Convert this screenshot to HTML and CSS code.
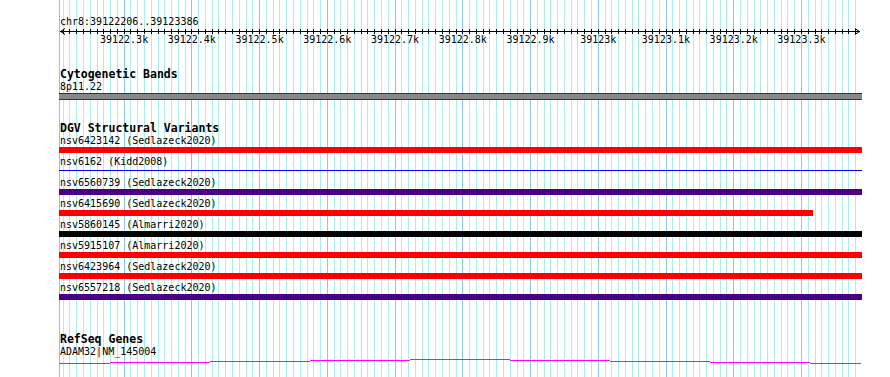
FILE: index.html
```html
<!DOCTYPE html>
<html lang="en">
<head>
    <meta charset="UTF-8">
    <title>chr8:39122206..39123386</title>
    <link rel="stylesheet" href="styles.css">
</head>
<body>
    <div class="browser">
        <!-- Lineas de la rejilla, generadas abajo -->
        <svg class="grid" id="grid" width="890" height="377">
            <line class="gridline major" x1="59.5" y1="0" x2="59.5" y2="377"></line>
        </svg>

        <div class="tracks">
            <div class="ruler">
                <div class="locus">chr8:39122206..39123386</div>
                <svg class="scale" id="scale" width="803" height="20">
                    <line class="scale-line" x1="1" y1="3.5" x2="801" y2="3.5"></line>
                    <polyline class="scale-arrow" points="6,0.5 1.5,3.5 6,6.5"></polyline>
                    <polyline class="scale-arrow" points="796,0.5 800.5,3.5 796,6.5"></polyline>
                    <text x="65.1" y="15">39122.3k</text>
                    <text x="132.8" y="15">39122.4k</text>
                    <text x="200.6" y="15">39122.5k</text>
                    <text x="268.3" y="15">39122.6k</text>
                    <text x="336" y="15">39122.7k</text>
                    <text x="403.8" y="15">39122.8k</text>
                    <text x="471.5" y="15">39122.9k</text>
                    <text x="539.2" y="15">39123k</text>
                    <text x="606.9" y="15">39123.1k</text>
                    <text x="674.7" y="15">39123.2k</text>
                    <text x="742.4" y="15">39123.3k</text>
                </svg>
            </div>

            <div class="track track-cyto">
                <div class="track-title">Cytogenetic Bands</div>
                <div class="feature-label">8p11.22</div>
                <div class="band"></div>
            </div>

            <div class="track track-dgv">
                <div class="track-title">DGV Structural Variants</div>
                <div class="feature">
                    <div class="feature-label">nsv6423142 (Sedlazeck2020)</div>
                    <div class="bar red"></div>
                </div>
                <div class="feature">
                    <div class="feature-label">nsv6162 (Kidd2008)</div>
                    <div class="bar thin"></div>
                </div>
                <div class="feature">
                    <div class="feature-label">nsv6560739 (Sedlazeck2020)</div>
                    <div class="bar purple"></div>
                </div>
                <div class="feature">
                    <div class="feature-label">nsv6415690 (Sedlazeck2020)</div>
                    <div class="bar red" style="width: 754px"></div>
                </div>
                <div class="feature">
                    <div class="feature-label">nsv5860145 (Almarri2020)</div>
                    <div class="bar black"></div>
                </div>
                <div class="feature">
                    <div class="feature-label">nsv5915107 (Almarri2020)</div>
                    <div class="bar red"></div>
                </div>
                <div class="feature">
                    <div class="feature-label">nsv6423964 (Sedlazeck2020)</div>
                    <div class="bar red"></div>
                </div>
                <div class="feature">
                    <div class="feature-label">nsv6557218 (Sedlazeck2020)</div>
                    <div class="bar purple"></div>
                </div>
            </div>

            <div class="track track-genes">
                <div class="track-title">RefSeq Genes</div>
                <div class="feature-label">ADAM32|NM_145004</div>
                <svg class="gene" width="803" height="8">
                    <path d="M0,5.5 H51 M51,4.5 H151 M151,3.5 H251 M251,2.5 H351 M351,1.5 H451 M451,2.5 H551 M551,3.5 H651 M651,4.5 H751 M751,5.5 H802"></path>
                </svg>
            </div>
        </div>
    </div>

    <script>
        // Rejilla y marcas de la regla: una linea cada 10 pb desde 39122210
        const ns = 'http://www.w3.org/2000/svg';
        const grid = document.getElementById('grid');
        const scale = document.getElementById('scale');

        for (let n = 0; n <= 117; n++) {
            const col = Math.floor(63.21 + 6.773 * n);
            const major = n % 10 === 9; // cada 100 pb

            const line = document.createElementNS(ns, 'line');
            line.setAttribute('x1', col + 0.5);
            line.setAttribute('x2', col + 0.5);
            line.setAttribute('y1', 0);
            line.setAttribute('y2', 377);
            line.setAttribute('class', major ? 'gridline major' : 'gridline');
            grid.appendChild(line);

            const tick = document.createElementNS(ns, 'line');
            tick.setAttribute('x1', col - 59 + 0.5);
            tick.setAttribute('x2', col - 59 + 0.5);
            tick.setAttribute('y1', 1);
            tick.setAttribute('y2', 6);
            tick.setAttribute('class', 'tick');
            scale.appendChild(tick);
        }
    </script>
</body>
</html>
```

FILE: styles.css
```css
* {
    margin: 0;
    padding: 0;
    box-sizing: border-box;
}

body {
    background: #fff;
    font-family: "DejaVu Sans Mono", monospace;
    color: #000;
}

.browser {
    position: relative;
    width: 890px;
    height: 377px;
    overflow: hidden;
}

/* Rejilla de fondo */
.grid {
    position: absolute;
    top: 0;
    left: 0;
    shape-rendering: crispEdges;
}

.gridline {
    stroke: #aaeeee;
    stroke-width: 1;
}

.gridline.major {
    stroke: #88c8ec;
}

.tracks {
    position: relative;
    margin-left: 59px;
    width: 803px;
}

/* Regla */
.locus {
    padding-top: 16px;
    font-size: 10px;
    line-height: 12px;
    padding-left: 1px;
}

.scale {
    display: block;
}

.scale-line,
.tick {
    shape-rendering: crispEdges;
}

.scale-line,
.tick,
.scale-arrow {
    stroke: #000;
    stroke-width: 1;
    fill: none;
}

.scale text {
    font-family: "DejaVu Sans Mono", monospace;
    font-size: 10px;
    text-anchor: middle;
    fill: #000;
}

/* Pistas */
.track-title {
    font-size: 11.5px;
    font-weight: bold;
    line-height: 13px;
    padding-left: 1px;
}

.feature-label {
    font-size: 10px;
    line-height: 12px;
    padding-left: 1px;
    white-space: nowrap;
}

.track-cyto {
    margin-top: 20px;
}

.band {
    height: 7px;
    background: #888;
    border-top: 1px solid #333;
    border-bottom: 1px solid #333;
}

.track-dgv {
    margin-top: 22px;
}

.feature {
    margin-bottom: 3px;
}

.bar {
    height: 6px;
    width: 100%;
}

.bar.red {
    background: #ff0000;
}

.bar.purple {
    background: #4b0082;
}

.bar.black {
    background: #000;
}

.bar.thin {
    border-top: 2px solid transparent;
    background: linear-gradient(#0000ff, #0000ff) top / 100% 1px no-repeat;
    background-origin: padding-box;
}

.track-genes {
    margin-top: 33px;
}

.gene {
    display: block;
    shape-rendering: crispEdges;
}

.gene path {
    stroke: #ff00ff;
    stroke-width: 1;
    fill: none;
}
```
